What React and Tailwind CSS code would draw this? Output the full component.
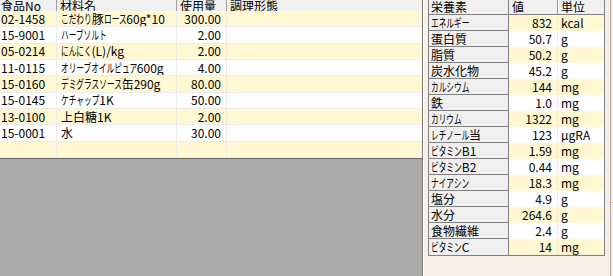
import React from 'react'

// condensed kana, like the half-width kana of the old UI font
const N = ({ t }) => (
    <span className="inline-block origin-left scale-x-[0.64] whitespace-nowrap" style={{ marginRight: -t.length * 12 * 0.36 }}>{ t }</span>
)

const materials = [
    { code: "02-1458", name: [ <N t="こだわり"/>, "豚", <N t="ロース"/>, "60g*10" ], qty: "300.00" },
    { code: "15-9001", name: [ <N t="ハーブソルト"/> ], qty: "2.00" },
    { code: "05-0214", name: [ <N t="にんにく"/>, "(L)/kg" ], qty: "2.00" },
    { code: "11-0115", name: [ <N t="オリーブオイルピュア"/>, "600g" ], qty: "4.00" },
    { code: "15-0160", name: [ <N t="デミグラスソース"/>, "缶290g" ], qty: "80.00" },
    { code: "15-0145", name: [ <N t="ケチャップ"/>, "1K" ], qty: "50.00" },
    { code: "13-0100", name: [ "上白糖1K" ], qty: "2.00" },
    { code: "15-0001", name: [ "水" ], qty: "30.00" },
    { code: "", name: [], qty: "" },
]

const nutrients = [
    [ [ <N t="エネルギー"/> ], "832", "kcal" ],
    [ [ "蛋白質" ], "50.7", "g" ],
    [ [ "脂質" ], "50.2", "g" ],
    [ [ "炭水化物" ], "45.2", "g" ],
    [ [ <N t="カルシウム"/> ], "144", "mg" ],
    [ [ "鉄" ], "1.0", "mg" ],
    [ [ <N t="カリウム"/> ], "1322", "mg" ],
    [ [ <N t="レチノール"/>, "当" ], "123", "μgRA" ],
    [ [ <N t="ビタミン"/>, "B1" ], "1.59", "mg" ],
    [ [ <N t="ビタミン"/>, "B2" ], "0.44", "mg" ],
    [ [ <N t="ナイアシン"/> ], "18.3", "mg" ],
    [ [ "塩分" ], "4.9", "g" ],
    [ [ "水分" ], "264.6", "g" ],
    [ [ "食物繊維" ], "2.4", "g" ],
    [ [ <N t="ビタミン"/>, "C" ], "14", "mg" ],
]

export default () => {
    return (
        <div className="w-[613px] h-[276px] flex overflow-hidden bg-[#f8f0e6] text-[12px] leading-none text-black font-['MS_UI_Gothic','Noto_Sans_CJK_JP',sans-serif]">
            {/* left: recipe grid */}
            <div className="w-[423px] shrink-0 h-full flex flex-col border-r border-[#7c7c7c] bg-[#ababab]">
                <div className="flex h-[11px] overflow-hidden bg-[#f0f0f0] leading-[11px]">
                    <div className="w-[57px] shrink-0 border-r border-[#a0a0a0] pl-[1px]">食品No</div>
                    <div className="w-[120px] shrink-0 border-r border-[#a0a0a0] pl-[3px]">材料名</div>
                    <div className="w-[50px] shrink-0 border-r border-[#a0a0a0] pl-[3px]">使用量</div>
                    <div className="flex-1 pl-[3px]">調理形態</div>
                </div>
                <div className="h-[147px] flex flex-col">
                    { materials.map( (m, i) =>
                        <div key={i} className={ "flex-1 flex border-b border-[#ececec] " + ( i % 2 == 0 ? "bg-[#fff8d2]" : "bg-white" ) }>
                            <div className="w-[57px] shrink-0 border-r border-[#ececec] pl-[1px] flex items-center">{ m.code }</div>
                            <div className="w-[120px] shrink-0 border-r border-[#ececec] pl-[4px] flex items-center whitespace-nowrap overflow-hidden">
                                { m.name.map( (s, j) => <React.Fragment key={j}>{ s }</React.Fragment> ) }
                            </div>
                            <div className="w-[50px] shrink-0 border-r border-[#ececec] pr-[5px] flex items-center justify-end">{ m.qty }</div>
                            <div className="flex-1"></div>
                        </div>
                    ) }
                </div>
                <div className="h-px bg-[#6a6a6a]"></div>
                <div className="flex-1"></div>
            </div>

            {/* right: nutrients */}
            <div className="w-[187px] shrink-0 h-full border-l border-white pl-[4px]">
                <div className="w-[177px] border-x border-b border-[#808080]">
                    <div className="flex h-[15px] overflow-hidden bg-[#f0f0f0] border-b border-[#808080] leading-[13px]">
                        <div className="w-[80px] shrink-0 border-r border-[#808080] pl-[2px]">栄養素</div>
                        <div className="w-[49px] shrink-0 border-r border-[#a0a0a0] pl-[3px]">値</div>
                        <div className="flex-1 pl-[3px]">単位</div>
                    </div>
                    { nutrients.map( (n, i) =>
                        <div key={i} className={ "flex h-[16px] " + ( i % 2 == 0 ? "bg-[#fff8d2]" : "bg-white" ) }>
                            <div className={ "w-[80px] shrink-0 border-r border-[#808080] bg-[#f0f0f0] pl-[2px] flex items-center whitespace-nowrap overflow-hidden " + ( i < nutrients.length - 1 ? "border-b" : "" ) }>
                                { n[0].map( (s, j) => <React.Fragment key={j}>{ s }</React.Fragment> ) }
                            </div>
                            <div className="w-[49px] shrink-0 border-r border-[#ececec] pr-[5px] flex items-center justify-end">{ n[1] }</div>
                            <div className="flex-1 pl-[3px] flex items-center whitespace-nowrap">{ n[2] }</div>
                        </div>
                    ) }
                </div>
            </div>
            <div className="w-px shrink-0 h-full bg-[#a8a8a8]"></div>
            <div className="flex-1 h-full overflow-hidden relative">
                <span className="absolute left-[1px] top-[200px] whitespace-nowrap">前</span>
            </div>
        </div>
    )
}
